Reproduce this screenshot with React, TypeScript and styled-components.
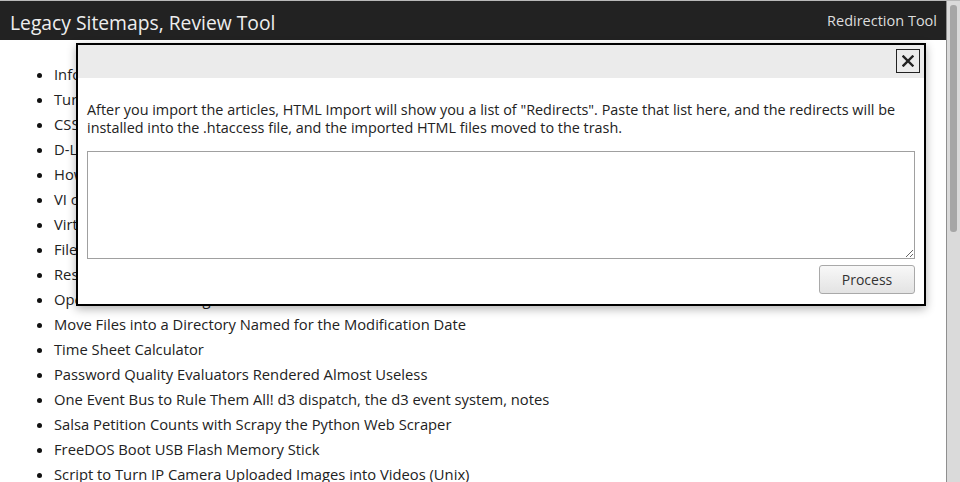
import React from "react";
import styled, { createGlobalStyle } from "styled-components";

const GlobalStyle = createGlobalStyle`
  html, body { margin: 0; padding: 0; overflow: hidden; background: #fff; }
  body { font-family: "Open Sans", "Noto Sans", sans-serif; color: #222; }
  * { box-sizing: border-box; }
`;

const Page = styled.div`
  display: flex;
  width: 960px;
  height: 482px;
  border-top: 1px solid #b9b9b9;
`;

const Main = styled.div`
  position: relative;
  flex: 1;
  min-width: 0;
  display: flex;
  flex-direction: column;
  overflow: hidden;
`;

const Header = styled.header`
  flex-shrink: 0;
  height: 39px;
  background: #222;
  display: flex;
  align-items: center;
  justify-content: space-between;
  padding: 0 9px 0 10px;
`;

const Title = styled.h1`
  margin: 4px 0 0;
  font-size: 19.3px;
  font-weight: 400;
  color: #eee;
`;

const NavLink = styled.a`
  font-size: 14.5px;
  color: #ddd;
  text-decoration: none;
  margin-top: -1px;
`;

const ArticleList = styled.ul`
  flex-shrink: 0;
  margin: 22px 0 0;
  padding: 0 0 0 54px;
  list-style: disc;
`;

const ArticleItem = styled.li`
  font-size: 14.75px;
  line-height: 25px;
  color: #222;
  white-space: nowrap;
  &::marker { color: #111; }
`;

const Modal = styled.div`
  position: absolute;
  left: 76px;
  top: 42px;
  width: 850px;
  height: 263px;
  border: 2px solid #000;
  background: #fff;
  box-shadow: 0 3px 9px rgba(0, 0, 0, 0.3);
  display: flex;
  flex-direction: column;
`;

const ModalBar = styled.div`
  flex-shrink: 0;
  height: 33px;
  background: #ebebeb;
  display: flex;
  justify-content: flex-end;
  align-items: flex-start;
  padding: 4px 4px 0 0;
`;

const CloseButton = styled.button`
  width: 24px;
  height: 24px;
  padding: 0;
  border: 1px solid #222;
  background: transparent;
  display: flex;
  align-items: center;
  justify-content: center;
  cursor: pointer;
`;

const ModalBody = styled.div`
  flex: 1;
  display: flex;
  flex-direction: column;
  padding: 23px 9px 0 9px;
`;

const Intro = styled.p`
  margin: 0;
  font-size: 14.4px;
  line-height: 18px;
  color: #222;
`;

const RedirectsInput = styled.textarea`
  margin-top: 14px;
  width: 828px;
  height: 108px;
  border: 1px solid #a0a0a0;
  resize: both;
  font-family: "Liberation Mono", monospace;
  font-size: 13px;
  outline: none;
`;

const Actions = styled.div`
  display: flex;
  justify-content: flex-end;
  margin-top: 6px;
`;

const ProcessButton = styled.button`
  width: 96px;
  height: 29px;
  border: 1px solid #a9a9a9;
  border-radius: 3px;
  background: linear-gradient(#f8f8f8, #e3e3e3);
  font-family: "Open Sans", "Noto Sans", sans-serif;
  font-size: 14px;
  color: #333;
  padding: 0;
  cursor: pointer;
`;

const Scrollbar = styled.div`
  flex-shrink: 0;
  width: 14px;
  background: #dadada;
  border-left: 1px solid #8f8f8f;
  padding: 4px 3px 0 3px;
`;

const Thumb = styled.div`
  height: 227px;
  background: #a6a6a6;
  border-radius: 3px;
`;

const articles = [
  "Information Architecture for Small Websites",
  "Turning an Old Laptop into a Home Server",
  "CSS Sprites Made Easy",
  "D-Link Router Firmware Upgrade Notes",
  "How to Back Up a MySQL Database",
  "VI cheat sheet",
  "Virtual Hosts on Apache",
  "File Permissions Explained",
  "Resizing Images in Bulk",
  "Open Source Licensing Basics",
  "Move Files into a Directory Named for the Modification Date",
  "Time Sheet Calculator",
  "Password Quality Evaluators Rendered Almost Useless",
  "One Event Bus to Rule Them All! d3 dispatch, the d3 event system, notes",
  "Salsa Petition Counts with Scrapy the Python Web Scraper",
  "FreeDOS Boot USB Flash Memory Stick",
  "Script to Turn IP Camera Uploaded Images into Videos (Unix)",
];

export default function App() {
  return (
    <Page>
      <GlobalStyle />
      <Main>
        <Header>
          <Title>Legacy Sitemaps, Review Tool</Title>
          <NavLink href="#">Redirection Tool</NavLink>
        </Header>
        <ArticleList>
          {articles.map((a) => (
            <ArticleItem key={a}>{a}</ArticleItem>
          ))}
        </ArticleList>
        <Modal>
          <ModalBar>
            <CloseButton aria-label="Close">
              <svg width="12" height="12" viewBox="0 0 12 12">
                <path d="M1.5 1.5 L10.5 10.5 M10.5 1.5 L1.5 10.5" stroke="#222" strokeWidth="2.4" strokeLinecap="square" />
              </svg>
            </CloseButton>
          </ModalBar>
          <ModalBody>
            <Intro>
              After you import the articles, HTML Import will show you a list of "Redirects". Paste that list here, and the redirects will be installed into the .htaccess file, and the imported HTML files moved to the trash.
            </Intro>
            <RedirectsInput />
            <Actions>
              <ProcessButton>Process</ProcessButton>
            </Actions>
          </ModalBody>
        </Modal>
      </Main>
      <Scrollbar>
        <Thumb />
      </Scrollbar>
    </Page>
  );
}
